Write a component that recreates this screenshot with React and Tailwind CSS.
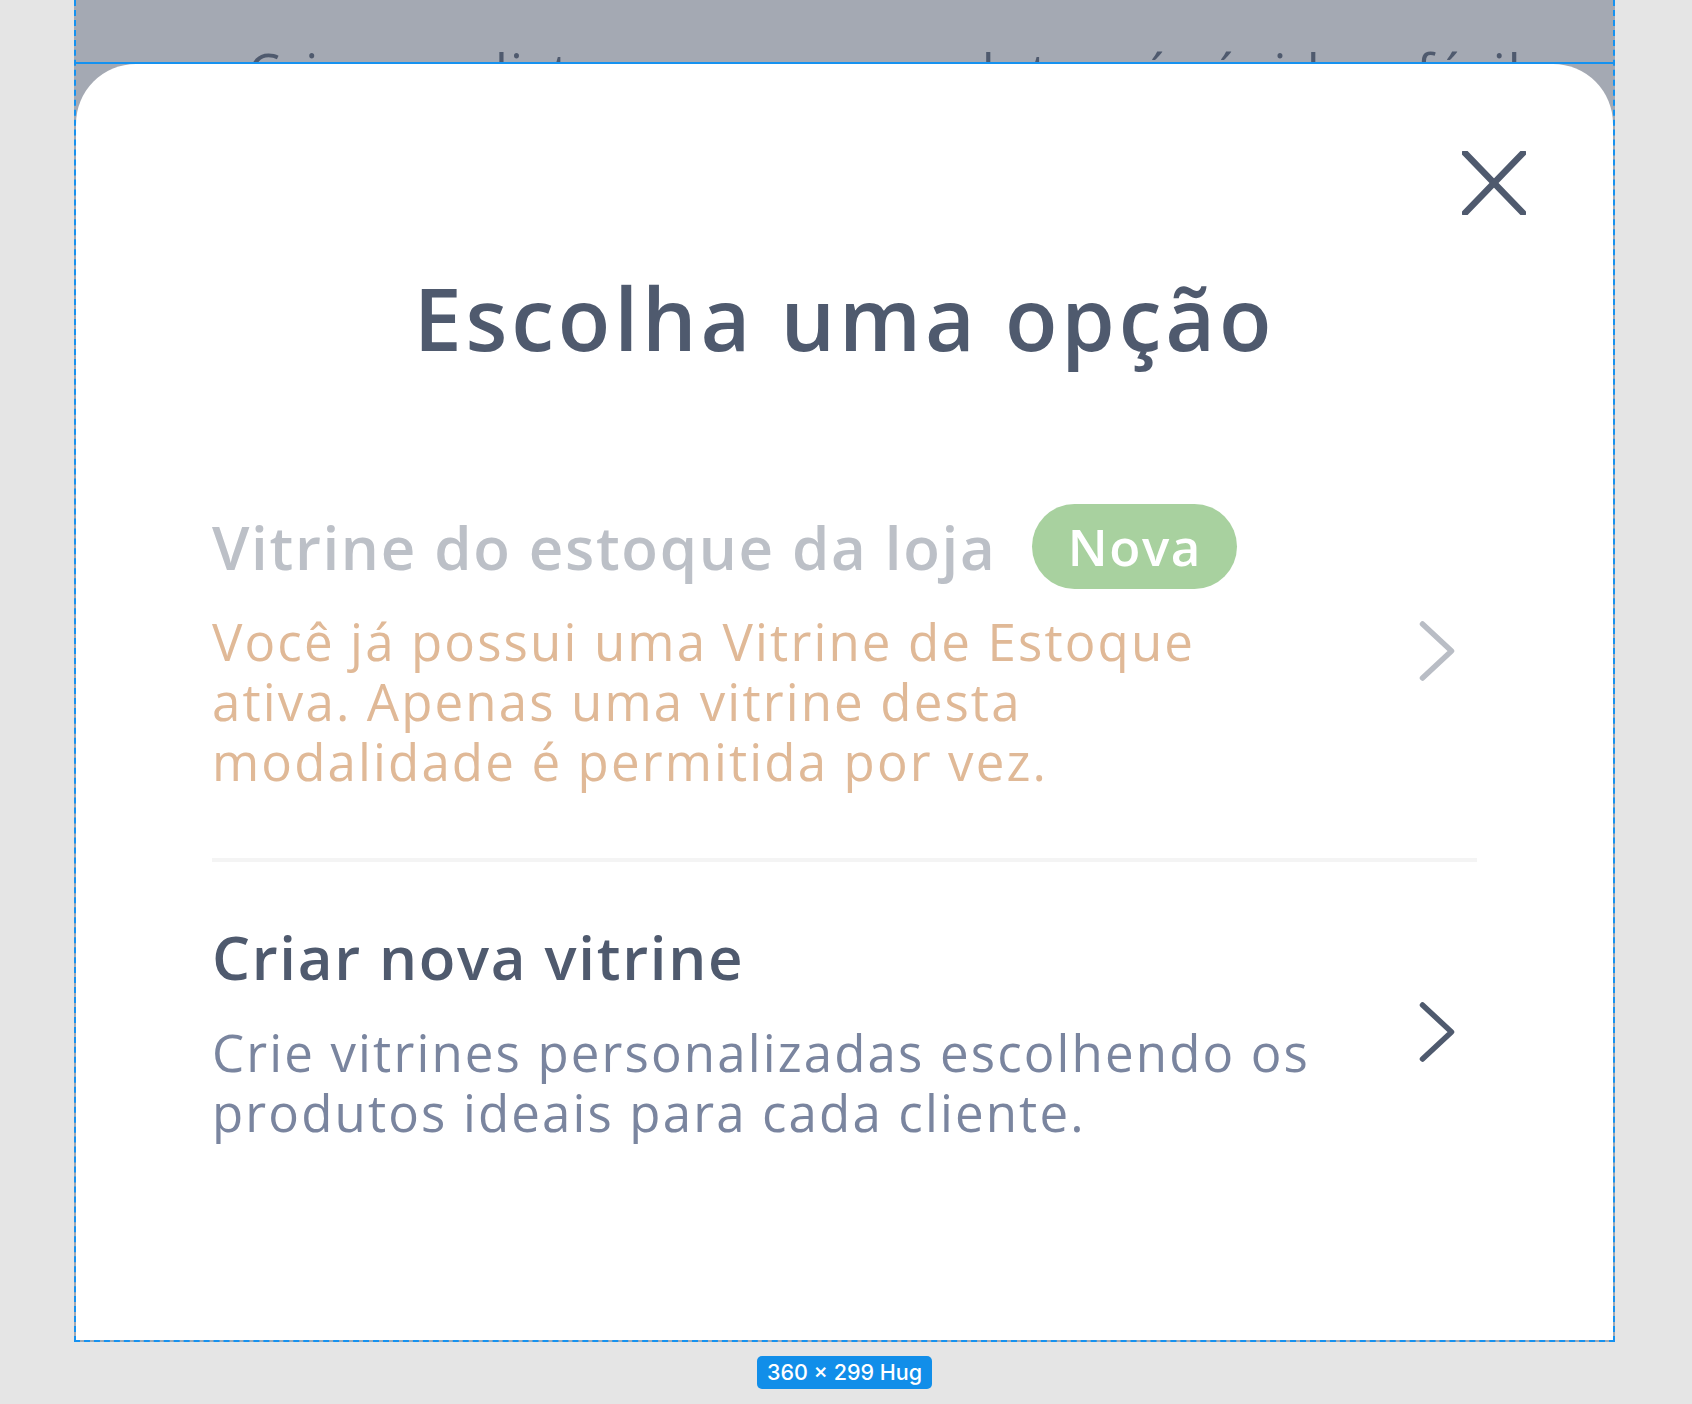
import React from "react";

const CloseIcon = () => (
  <svg viewBox="0 0 64 64" className="w-[64px] h-[64px]" fill="none" stroke="currentColor" strokeWidth="6.5" strokeLinecap="round">
    <path d="M3 2 61 62" />
    <path d="M61 2 3 62" />
  </svg>
);

const ChevronRight = ({ className }) => (
  <svg viewBox="0 0 36 64" className={className} fill="none" stroke="currentColor" strokeWidth="5.5" strokeLinecap="round" strokeLinejoin="round">
    <path d="M3.5 5 32.5 32 3.5 59" />
  </svg>
);

const OptionRow = ({ title, badge, description, disabled }) => (
  <div className="flex items-center">
    <div className="flex-1">
      <div className={`flex items-center gap-[36px] ${badge ? "h-[85px]" : ""}`}>
        <h2
          className={`text-[60px] leading-[72px] font-semibold tracking-[0.028em] ${
            disabled ? "text-[#bcc0c7]" : "text-[#4f5a6e]"
          }`}
        >
          {title}
        </h2>
        {badge && (
          <span className="flex h-[85px] w-[205px] items-center justify-center rounded-full bg-[#a8d19f] text-[51px] font-semibold tracking-[0.03em] text-white">
            {badge}
          </span>
        )}
      </div>
      <p
        className={`w-[1110px] text-[51px] leading-[60px] tracking-[0.042em] ${
          disabled ? "mt-[22px] text-[#e0b997]" : "mt-[29px] text-[#7a859f]"
        }`}
      >
        {description}
      </p>
    </div>
    <ChevronRight
      className={`w-[36px] h-[64px] mr-[22px] shrink-0 ${disabled ? "mt-[7px] text-[#b9bdc5]" : "text-[#4f5a6e]"}`}
    />
  </div>
);

export default function App() {
  return (
    <div className="min-h-[1404px] w-full bg-[#e5e5e5] font-['Open_Sans',sans-serif]">
      <div className="ml-[74px] w-[1541px] border-x-2 border-b-2 border-dashed border-[#1592f0] bg-[#a4a9b3]">
        {/* conteúdo atrás do modal */}
        <div className="h-[62px] overflow-hidden pl-[172px] pt-[41px]">
          <p className="whitespace-nowrap text-[51px] leading-[60px] tracking-[0.042em] text-[#4f5a6e]">
            Crie uma lista com seus produtos, é rápido e fácil
          </p>
        </div>
        <div className="h-[2px] bg-[#1592f0]" />

        <div className="relative h-[1276px] rounded-t-[60px] bg-white px-[136px] pt-[202px]">
          <button className="absolute top-[87px] right-[87px] text-[#4f5a6e]">
            <CloseIcon />
          </button>

          <h1 className="text-center text-[86px] leading-[104px] font-semibold tracking-[0.045em] text-[#4f5a6e]">
            Escolha uma opção
          </h1>

          <div className="mt-[134px]">
            <OptionRow
              disabled
              title="Vitrine do estoque da loja"
              badge="Nova"
              description="Você já possui uma Vitrine de Estoque ativa. Apenas uma vitrine desta modalidade é permitida por vez."
            />
          </div>

          <div className="mt-[67px] h-[4px] bg-[#f4f4f4]" />

          <div className="mt-[59px]">
            <OptionRow
              title="Criar nova vitrine"
              description="Crie vitrines personalizadas escolhendo os produtos ideais para cada cliente."
            />
          </div>
        </div>
      </div>

      <div className="ml-[74px] flex w-[1541px] justify-center pt-[14px]">
        <span className="flex h-[33px] items-center rounded-[5px] bg-[#118ee9] px-[10px] font-['Inter',sans-serif] text-[21.5px] font-medium text-white">
          360 × 299 Hug
        </span>
      </div>
    </div>
  );
}
